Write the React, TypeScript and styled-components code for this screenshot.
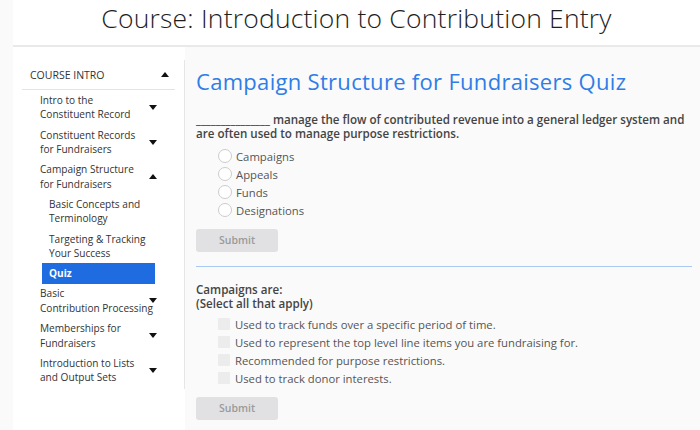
import React from "react";
import styled, { createGlobalStyle } from "styled-components";

const Global = createGlobalStyle`
  html, body { margin: 0; padding: 0; }
  body {
    background: #fafafa;
    font-family: "Open Sans", "Noto Sans", sans-serif;
    color: #333;
  }
`;

const Page = styled.div`
  width: 700px;
  height: 430px;
  overflow: hidden;
`;

const Header = styled.header`
  height: 45px;
  margin-left: 13px;
  display: flex;
  align-items: center;
  justify-content: center;
  background: #fff;
`;

const CourseTitle = styled.h1`
  margin: 0;
  font-size: 26.5px;
  font-weight: 300;
  color: #1e1e1e;
  letter-spacing: 0.2px;
  padding-bottom: 9px;
`;

const Rule = styled.div`
  margin-left: 13px;
  height: 2px;
  background: #e9e9e9;
`;

const Body = styled.div`
  display: grid;
  grid-template-columns: 172px 1fr;
  margin-left: 13px;
  height: 383px;
`;

const Sidebar = styled.aside`
  background: #fff;
  padding-top: 13px;
`;

const Nav = styled.nav`
  border-right: 1px solid #e6e6e6;
  padding: 0 9px 1px 9px;
`;

const NavHead = styled.div`
  display: flex;
  align-items: center;
  justify-content: space-between;
  height: 29px;
  padding: 0 6px 0 8px;
  border-bottom: 1px solid #e3e3e3;
  font-size: 10.5px;
  color: #333;
  text-transform: uppercase;
`;

const Caret = styled.span<{ $up?: boolean }>`
  width: 0;
  height: 0;
  border-left: 4px solid transparent;
  border-right: 4px solid transparent;
  ${(p) => (p.$up ? "border-bottom: 5px solid #111;" : "border-top: 5px solid #111;")}
  flex: none;
`;

const Item = styled.div<{ $sub?: boolean; $active?: boolean }>`
  display: flex;
  align-items: center;
  justify-content: space-between;
  margin: 0 ${(p) => (p.$sub ? "20px" : "18px")} 0 ${(p) => (p.$sub ? "20px" : "18px")};
  padding: 2.85px 0 2.85px ${(p) => (p.$sub ? "7px" : "0")};
  background: ${(p) => (p.$active ? "#1e6ce0" : "transparent")};
  color: ${(p) => (p.$active ? "#fff" : "#333")};
  font-weight: ${(p) => (p.$active ? 700 : 400)};
  font-size: 10.1px;
  line-height: 14.5px;
`;

const ItemText = styled.span`
  white-space: pre;
  min-width: 0;
`;

const Main = styled.main`
  padding: 19px 8px 0 11px;
`;

const QuizTitle = styled.h2`
  margin: 0 0 17px 0;
  font-size: 22px;
  font-weight: 400;
  color: #2f7de6;
  letter-spacing: 0.3px;
`;

const Question = styled.p<{ $tight?: boolean }>`
  margin: 0 0 ${(p) => (p.$tight ? "5px" : "7px")} 0;
  font-size: 11.6px;
  line-height: 13.5px;
  font-weight: 600;
  color: #444;
`;

const Options = styled.div`
  display: flex;
  flex-direction: column;
  padding-left: 22px;
  margin-bottom: 8px;
`;

const Option = styled.label`
  display: flex;
  align-items: center;
  gap: 4px;
  height: 18px;
  font-size: 11.3px;
  color: #555;
`;

const Radio = styled.span`
  width: 12px;
  height: 12px;
  border-radius: 50%;
  border: 1px solid #ccc;
  background: #fff;
  flex: none;
`;

const Box = styled.span`
  width: 12px;
  height: 12px;
  margin-right: 1px;
  background: #ececec;
  border-radius: 1px;
  flex: none;
`;

const Submit = styled.button`
  width: 82px;
  height: 23px;
  border: none;
  border-radius: 3px;
  background: #e1e1e3;
  color: #9a9a9a;
  font-family: inherit;
  font-size: 10.5px;
  font-weight: 600;
  padding: 0;
`;

const Divider = styled.hr`
  border: none;
  height: 1.5px;
  background: #a9c9f2;
  margin: 14px 0 16px 0;
`;

const nav = [
  { t: "Intro to the\nConstituent Record" },
  { t: "Constituent Records\nfor Fundraisers" },
  { t: "Campaign Structure\nfor Fundraisers", up: true },
  { t: "Basic Concepts and\nTerminology", sub: true },
  { t: "Targeting & Tracking\nYour Success", sub: true },
  { t: "Quiz", sub: true, active: true },
  { t: "Basic\nContribution Processing" },
  { t: "Memberships for\nFundraisers" },
  { t: "Introduction to Lists\nand Output Sets" },
];

export default function App() {
  return (
    <Page>
      <Global />
      <Header>
        <CourseTitle>Course: Introduction to Contribution Entry</CourseTitle>
      </Header>
      <Rule />
      <Body>
        <Sidebar>
          <Nav>
            <NavHead>
              <span>Course Intro</span>
              <Caret $up />
            </NavHead>
            {nav.map((n) => (
              <Item key={n.t} $sub={n.sub} $active={n.active}>
                <ItemText>{n.t}</ItemText>
                {!n.sub && <Caret $up={n.up} />}
              </Item>
            ))}
          </Nav>
        </Sidebar>
        <Main>
          <QuizTitle>Campaign Structure for Fundraisers Quiz</QuizTitle>
          <Question>
            _______________ manage the flow of contributed revenue into a general ledger system and are often used to
            manage purpose restrictions.
          </Question>
          <Options>
            {["Campaigns", "Appeals", "Funds", "Designations"].map((o) => (
              <Option key={o}>
                <Radio />
                {o}
              </Option>
            ))}
          </Options>
          <Submit>Submit</Submit>
          <Divider />
          <Question $tight>
            Campaigns are:
            <br />
            (Select all that apply)
          </Question>
          <Options>
            {[
              "Used to track funds over a specific period of time.",
              "Used to represent the top level line items you are fundraising for.",
              "Recommended for purpose restrictions.",
              "Used to track donor interests.",
            ].map((o) => (
              <Option key={o}>
                <Box />
                {o}
              </Option>
            ))}
          </Options>
          <Submit>Submit</Submit>
        </Main>
      </Body>
    </Page>
  );
}
